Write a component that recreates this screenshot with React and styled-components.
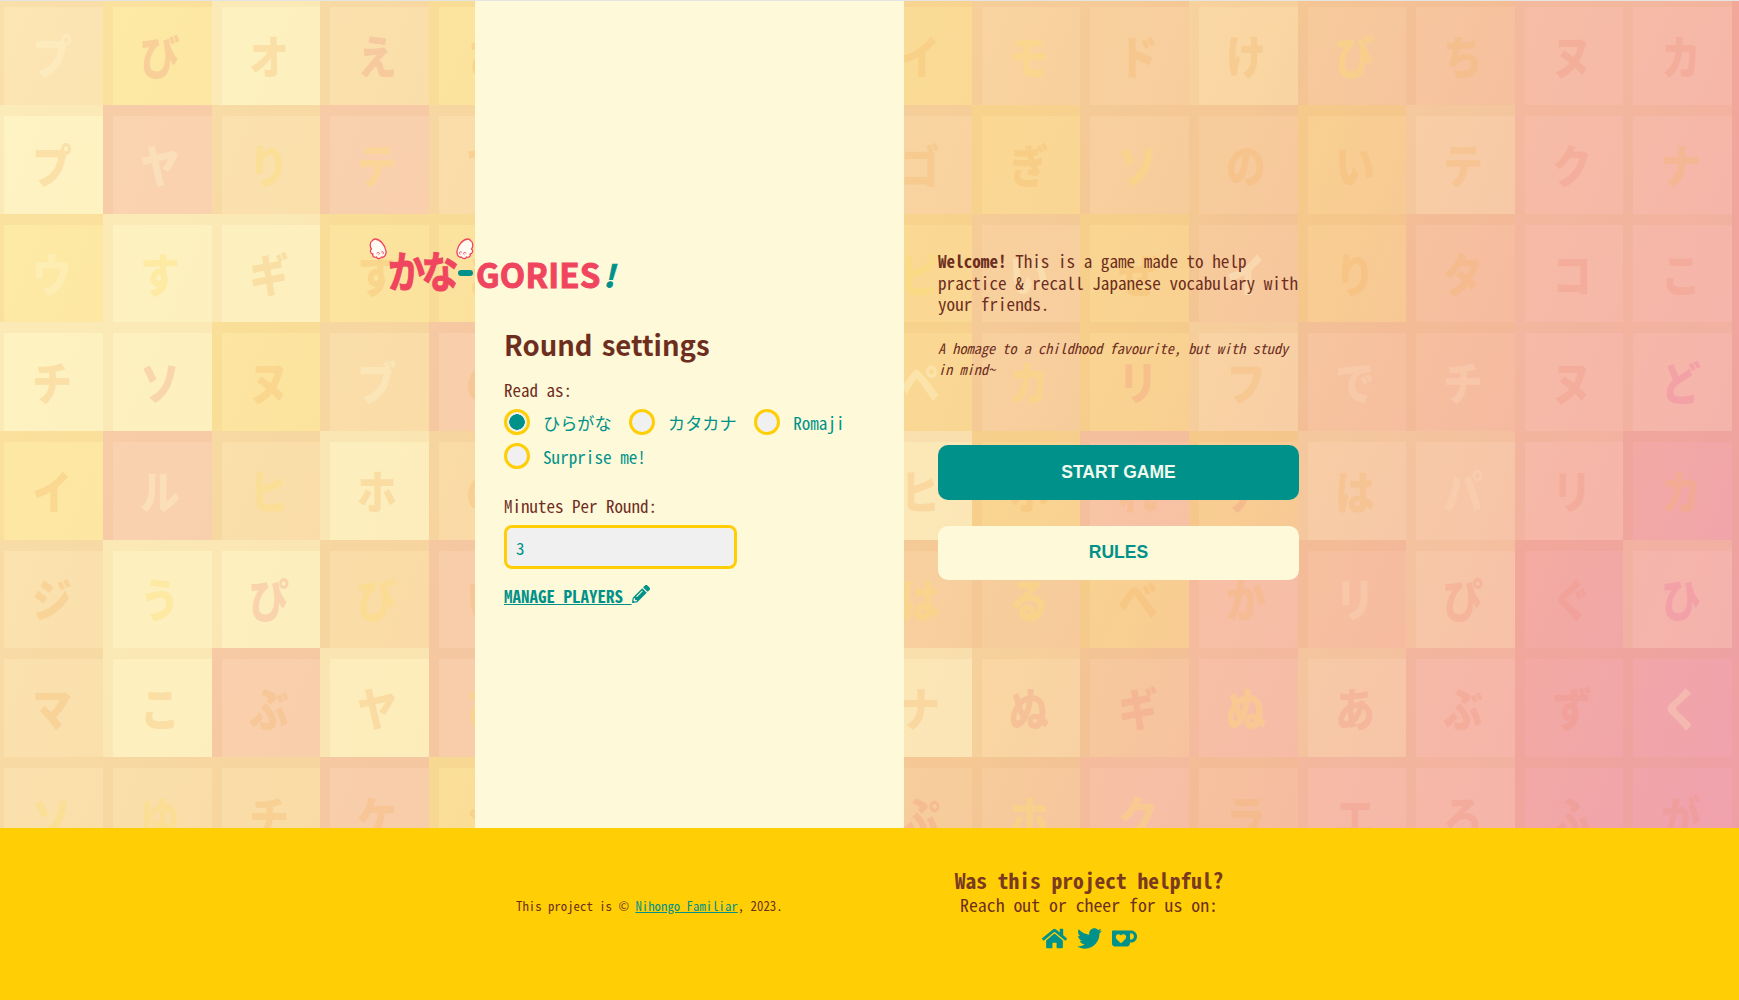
import React from "react";
import styled, { createGlobalStyle } from "styled-components";
import { FaHome, FaTwitter, FaPencilAlt } from "react-icons/fa";
import { SiKofi } from "react-icons/si";

const TEAL = "#00928a";
const BROWN = "#6e2e1e";
const RED = "#f0455f";
const YELLOW = "#ffce05";
const CREAM = "#fef9d9";
const MONO = `"Noto Sans Mono CJK JP", "Noto Sans CJK JP", "Liberation Mono", monospace`;
const ROUND = `"Noto Sans CJK JP", "Noto Sans", sans-serif`;

const Global = createGlobalStyle`
  html, body { margin: 0; padding: 0; }
  body { font-family: ${MONO}; color: ${BROWN}; background: #fff; }
  * { box-sizing: border-box; }
`;

const TILE_BG = {
  c: "rgba(255,248,205,.55)",
  k: "rgba(255,238,195,.26)",
  y: "rgba(255,226,125,.25)",
  o: "rgba(250,200,170,.2)",
  p: "rgba(248,188,176,.5)",
  P: "rgba(240,150,170,.26)",
  n: "transparent",
};
const GLYPH = {
  c: "rgba(255,248,210,.34)",
  y: "rgba(255,222,110,.36)",
  o: "rgba(245,180,100,.3)",
  p: "rgba(240,145,125,.28)",
  P: "rgba(240,125,160,.34)",
  l: "rgba(252,215,185,.42)",
};

const ROWS = [
  ["プoc","びyp","オco","えop","さyo","","","","イyo","モoy","ドoo","けko","びoy","ちoo","ヌpp","カpp","カP"],
  ["プco","ヤpc","りoy","テpy","てoo","","","","ゴoo","ぎyo","ソoy","のoo","いyo","テko","クpp","ナpo","ナP"],
  ["ウyc","すcy","ギco","すyo","まyo","","","","ピyy","いoc","ぜyo","イoc","りyo","タoo","コpp","こpp","こP"],
  ["チco","ソcp","ヌyo","ブoc","のpo","","","","ペyc","カoy","リyp","フko","でol","チol","ヌpp","どpP","どP"],
  ["イyo","ルpc","ヒoy","ホco","のoo","","","","ヒco","ホyo","れpo","アyp","はko","パkl","リpp","カPo","カP"],
  ["ジoo","うcy","ぴcp","びoy","いpo","","","","はoy","るoy","べyo","かpo","リol","ぴkp","ぐPp","ひpP","ひP"],
  ["マoo","こco","ぶpo","ヤco","ひpy","","","","ナco","ぬkp","ギop","ぬpy","あkp","ぶpp","ずPp","くPl","くP"],
  ["ソoy","ゆoy","チoo","ケpo","シyo","","","","ぷop","ホoy","クpy","ラoo","エpp","ろpp","ふPp","がPp","がP"],
];

const Page = styled.div`
  display: flex;
  flex-direction: column;
  min-height: 1000px;
  border-top: 1px solid #e4e4e4;
`;

const Main = styled.main`
  position: relative;
  height: 827px;
  overflow: hidden;
  background: linear-gradient(112deg, #fdeeb6 0%, #f9dda2 38%, #f7cd98 62%, #f4b2a0 85%, #f0a5b0 100%);
  display: grid;
  grid-template-columns: 475px 429px 1fr;
`;

const TileGrid = styled.div`
  position: absolute;
  left: -5.6px;
  top: -4.6px;
  display: grid;
  grid-template-columns: repeat(17, 108.6px);
  grid-auto-rows: 108.65px;
`;

const Tile = styled.div`
  display: flex;
  align-items: center;
  justify-content: center;
  padding: 0 4px 4px 0;
  border-top: 11px solid rgba(222, 140, 70, 0.08);
  border-left: 10.6px solid rgba(222, 140, 70, 0.08);
  background: ${(p) => TILE_BG[p.$bg] || "transparent"};
`;

const Glyph = styled.span`
  font-family: ${ROUND};
  font-weight: 900;
  font-size: 46px;
  line-height: 1;
  color: ${(p) => GLYPH[p.$fg] || "transparent"};
  transform: scaleX(0.86);
`;

const Spacer = styled.div``;

const Panel = styled.section`
  position: relative;
  grid-column: 2;
  background: ${CREAM};
  padding: 237px 29px 0;
  display: flex;
  flex-direction: column;
  align-items: flex-start;
`;

const Logo = styled.div`
  display: flex;
  align-items: flex-end;
  height: 60px;
  margin-left: -135px;
  position: relative;
  width: 250px;
  white-space: nowrap;
  font-family: ${ROUND};
  font-weight: 700;
  color: ${RED};
  -webkit-text-stroke: 1px ${RED};
`;

const LogoKana = styled.span`
  margin: 0 -5px 3px 19px;
  font-size: 43px;
  line-height: 51px;
  letter-spacing: -4px;
  display: inline-block;
  width: 71px;
  transform: scaleX(0.86);
  transform-origin: left center;
`;

const LogoDash = styled.span`
  width: 15px;
  height: 6px;
  border-radius: 3px;
  background: ${TEAL};
  margin: 0 3px 22px 4px;
`;

const LogoWord = styled.span`
  font-size: 33px;
  line-height: 47px;
  letter-spacing: 0.2px;
`;

const LogoBang = styled.span`
  color: ${TEAL};
  -webkit-text-stroke: 1px ${TEAL};
  font-size: 30px;
  line-height: 47px;
  font-style: italic;
  margin-left: 3px;
`;

const WingSvg = styled.svg`
  position: absolute;
  top: 0;
  left: ${(p) => p.$left}px;
  width: 18px;
  height: 23px;
`;

const Wing = ({ left, flip }) => (
  <WingSvg $left={left} viewBox="0 0 18 23">
    <g transform={flip ? "translate(18 0) scale(-1 1)" : undefined}>
      <path
        d="M6 1C11 1 16 7 17 13C17.500 17 15 20 12.500 19C11 21.500 8 21 7.500 19C5 20 3 18 4 16C1.500 16 .5 12.500 2.500 11C.5 9 1 4 3 3C4 1.800 5 1 6 1Z"
        fill="#fffaf2"
        stroke={RED}
        strokeWidth="1.3"
        strokeLinejoin="round"
      />
      <path d="M8 15c2-1.500 3.500.5 2 1.500M12.500 14c1.500-1 3 .5 1.500 2" fill="none" stroke={RED} strokeWidth="1" strokeLinecap="round" />
    </g>
  </WingSvg>
);

const Title = styled.h2`
  margin: 26px 0 0;
  font-family: ${ROUND};
  font-weight: 700;
  font-size: 27.500px;
  line-height: 40px;
  letter-spacing: 0;
  word-spacing: 3px;
  color: ${BROWN};
`;

const FieldLabel = styled.div`
  font-size: 17px;
  line-height: 22px;
  color: ${BROWN};
  font-weight: 500;
  margin-top: ${(p) => p.$top}px;
`;

const RadioWrap = styled.div`
  display: flex;
  flex-wrap: wrap;
  column-gap: 17.500px;
  row-gap: 8px;
  margin-top: 8px;
  width: 360px;
`;

const RadioLabel = styled.label`
  display: flex;
  align-items: center;
  gap: 13px;
  height: 26px;
  font-size: 17.150px;
  color: ${TEAL};
`;

const RadioInput = styled.input.attrs({ type: "radio", name: "read" })`
  appearance: none;
  width: 26px;
  height: 26px;
  margin: 0;
  border-radius: 50%;
  border: 3.500px solid ${YELLOW};
  background: #f0f0f0;
  &:checked {
    background: radial-gradient(circle, ${TEAL} 0 7.500px, #f0f0f0 8px);
  }
`;

const NumberInput = styled.input`
  width: 233px;
  height: 44px;
  margin-top: 8px;
  padding: 0 9px;
  border: 3.500px solid ${YELLOW};
  border-radius: 8px;
  background: #f0f0f0;
  font-family: ${MONO};
  font-size: 17px;
  color: ${TEAL};
  outline: none;
`;

const Manage = styled.a`
  margin-top: 15px;
  display: inline-flex;
  align-items: center;
  font-size: 17px;
  line-height: 24px;
  font-weight: 700;
  color: ${TEAL};
  text-decoration: underline;
  white-space: pre;
  svg { font-size: 18px; margin-bottom: 4px; }
`;

const Side = styled.section`
  grid-column: 3;
  position: relative;
  padding: 249px 0 0 34px;
  width: 395px;
  display: flex;
  flex-direction: column;
`;

const Intro = styled.p`
  margin: 0;
  font-size: 17.150px;
  line-height: 21.500px;
  color: ${BROWN};
  b { font-weight: 700; }
`;

const Tagline = styled.p`
  margin: 22px 0 0;
  font-size: 14.300px;
  line-height: 21.500px;
  font-style: italic;
  color: ${BROWN};
`;

const ActionButton = styled.button`
  display: block;
  width: 100%;
  height: 54.500px;
  border: 0;
  border-radius: 10px;
  margin-top: ${(p) => p.$top}px;
  font-family: "Liberation Sans", Arial, sans-serif;
  font-weight: 700;
  font-size: 17.500px;
  color: ${(p) => (p.$primary ? "#f2f9ee" : TEAL)};
  background: ${(p) => (p.$primary ? TEAL : CREAM)};
`;

const Footer = styled.footer`
  height: 172px;
  background: ${YELLOW};
  display: grid;
  grid-template-columns: 516px 265px 174px 268px;
`;

const Copy = styled.div`
  grid-column: 2;
  align-self: center;
  font-size: 12.800px;
  line-height: 18px;
  color: ${BROWN};
  white-space: nowrap;
  margin-top: -17px;
  a { color: ${TEAL}; }
`;

const Cheer = styled.div`
  grid-column: 4;
  display: flex;
  flex-direction: column;
  align-items: center;
  padding-top: 38px;
  white-space: nowrap;
`;

const CheerTitle = styled.div`
  font-size: 21.500px;
  line-height: 28px;
  font-weight: 700;
  color: #7a3a20;
`;

const CheerText = styled.div`
  font-size: 17.800px;
  line-height: 21px;
  color: ${BROWN};
`;

const Socials = styled.div`
  display: flex;
  align-items: center;
  gap: 10px;
  margin-top: 11px;
  color: ${TEAL};
  font-size: 25px;
  line-height: 0;
`;

const labels = ["ひらがな", "カタカナ", "Romaji", "Surprise me!"];

export default function App() {
  return (
    <Page>
      <Global />
      <Main>
        <TileGrid aria-hidden="true">
          {ROWS.flatMap((row, r) =>
            row.map((t, c) =>
              t ? (
                <Tile key={`${r}-${c}`} $bg={t[1]}>
                  <Glyph $fg={t[2]}>{t[2] ? t[0] : ""}</Glyph>
                </Tile>
              ) : (
                <Spacer key={`${r}-${c}`} />
              )
            )
          )}
        </TileGrid>
        <Panel>
          <Logo>
            <Wing left={0} />
            <Wing left={87} flip />
            <LogoKana>かな</LogoKana>
            <LogoDash />
            <LogoWord>GORIES</LogoWord>
            <LogoBang>!</LogoBang>
          </Logo>
          <Title>Round settings</Title>
          <FieldLabel $top={15}>Read as:</FieldLabel>
          <RadioWrap>
            {labels.map((l, i) => (
              <RadioLabel key={l}>
                <RadioInput defaultChecked={i === 0} />
                {l}
              </RadioLabel>
            ))}
          </RadioWrap>
          <FieldLabel $top={26}>Minutes Per Round:</FieldLabel>
          <NumberInput type="number" defaultValue={3} />
          <Manage href="#">
            MANAGE PLAYERS <FaPencilAlt />
          </Manage>
        </Panel>
        <Side>
          <Intro>
            <b>Welcome!</b> This is a game made to help practice &amp; recall Japanese vocabulary with your friends.
          </Intro>
          <Tagline>A homage to a childhood favourite, but with study in mind~</Tagline>
          <ActionButton $primary $top={65.5}>START GAME</ActionButton>
          <ActionButton $top={26}>RULES</ActionButton>
        </Side>
      </Main>
      <Footer>
        <Copy>
          This project is © <a href="#">Nihongo Familiar</a>, 2023.
        </Copy>
        <Cheer>
          <CheerTitle>Was this project helpful?</CheerTitle>
          <CheerText>Reach out or cheer for us on:</CheerText>
          <Socials>
            <FaHome />
            <FaTwitter />
            <SiKofi />
          </Socials>
        </Cheer>
      </Footer>
    </Page>
  );
}
